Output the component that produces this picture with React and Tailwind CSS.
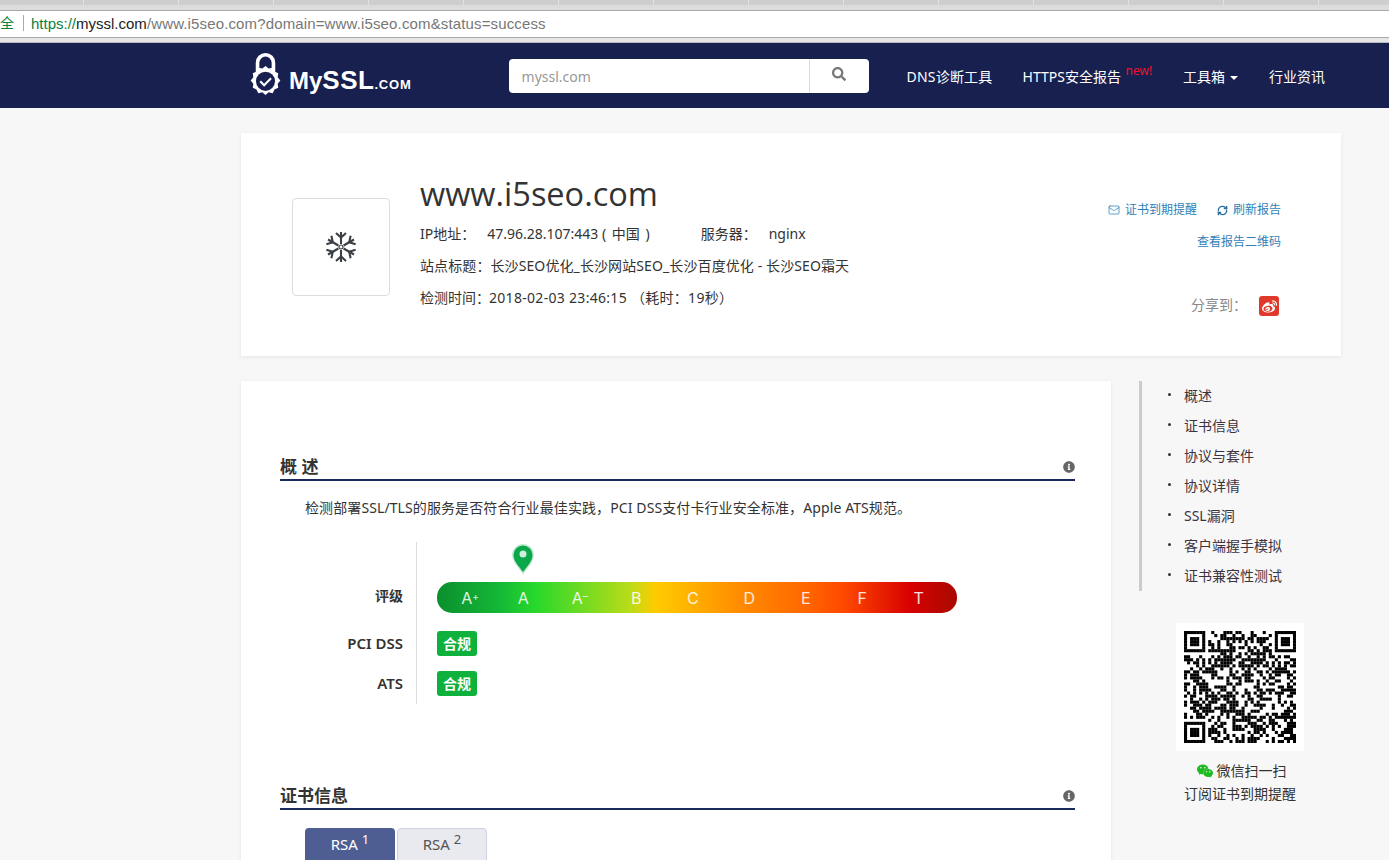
import React from "react";
import { Mail, RefreshCw } from "lucide-react";
import { FaSearch, FaInfoCircle } from "react-icons/fa";
import { SiSinaweibo, SiWechat } from "react-icons/si";

const font = "font-['Noto_Sans','Noto_Sans_CJK_SC',sans-serif]";
const sideLinks = ["概述", "证书信息", "协议与套件", "协议详情", "SSL漏洞", "客户端握手模拟", "证书兼容性测试"];

// fake qr, only has to look right
const qrCells = () => {
  const size = 37;
  const cells = [];
  let seed = 1337;
  const rand = () => {
    seed = (seed * 16807) % 2147483647;
    return seed / 2147483647;
  };
  const finder = (x, y) => {
    const dx = x < 7 ? x : x >= size - 7 ? x - (size - 7) : -1;
    const dy = y < 7 ? y : y >= size - 7 ? y - (size - 7) : -1;
    if (dx < 0 || dy < 0 || (x >= size - 7 && y >= size - 7)) return null;
    const ring = dx === 0 || dx === 6 || dy === 0 || dy === 6;
    const core = dx >= 2 && dx <= 4 && dy >= 2 && dy <= 4;
    return ring || core;
  };
  for (let y = 0; y < size; y++) {
    for (let x = 0; x < size; x++) {
      const f = finder(x, y);
      const nearFinder = (x < 8 && y < 8) || (x >= size - 8 && y < 8) || (x < 8 && y >= size - 8);
      const on = f === null ? !nearFinder && rand() > 0.47 : f;
      if (on) cells.push(<rect key={x + "-" + y} x={x} y={y} width="1.02" height="1.02" />);
    }
  }
  return cells;
};

const Logo = () => (
  <div className="flex items-center">
    <svg width="35" height="47" viewBox="0 0 33 44" className="mr-[6px] -ml-[2px]">
      <path d="M9 19V10a7.500 7.500 0 0 1 15 0v9" fill="none" stroke="#fff" strokeWidth="3.400" />
      <path
        d="M16.500 13l3 2.500 3.800-.8 1.700 3.500 3.500 1.700-.5 3.800 2.500 3-2.500 3 .5 3.800-3.500 1.700-1.700 3.500-3.800-.8-3 2.500-3-2.500-3.800.8-1.700-3.500-3.500-1.700.5-3.800-2.500-3 2.500-3-.5-3.800 3.500-1.700 1.700-3.500 3.800.8z"
        fill="#fff"
      />
      <circle cx="16.500" cy="27.500" r="9" fill="#182050" />
      <path d="M11.500 27.500l3.700 3.700 6.500-6.500" fill="none" stroke="#fff" strokeWidth="2" />
    </svg>
    <span className="text-[24px] font-semibold text-white leading-none font-['Liberation_Sans',sans-serif] mt-[9px]">
      My<span className="font-bold text-[26px] tracking-[0.5px]">SSL</span>
      <span className="font-bold text-[13px] tracking-[0.8px]">.COM</span>
    </span>
  </div>
);

const SnowIcon = () => (
  <svg width="34" height="34" viewBox="-17 -17 34 34" fill="none" stroke="#3b3f46" strokeWidth="2.100">
    {[0, 60, 120, 180, 240, 300].map((a) => (
      <g key={a} transform={`rotate(${a})`}>
        <path d="M0 -3V-15" />
        <path d="M-5 -14L0 -9.500L5 -14" />
      </g>
    ))}
    <circle cx="0" cy="0" r="2" strokeWidth="1.200" />
  </svg>
);

const SectionTitle = ({ title }) => (
  <div className="flex items-center justify-between border-b-2 border-[#1b2a5c] h-[29px] ml-[39px] mr-[36px] pt-[2px]">
    <h3 className="text-[17px] font-bold text-[#333] leading-none">{title}</h3>
    <FaInfoCircle size={12} color="#666" />
  </div>
);

const Badge = () => (
  <span className="flex items-center justify-center w-[40px] h-[25px] rounded-[3px] bg-[#0db13b] text-white text-[14px] font-bold">
    合规
  </span>
);

const Grade = ({ children, w = "w-[56.500px]" }) => (
  <span className={`${w} text-center leading-none`}>{children}</span>
);

export default function App() {
  return (
    <div className={`${font} h-[860px] w-[1389px] overflow-hidden bg-[#f7f7f7] text-[#333] text-[14px]`}>
      {/* browser bar */}
      <div className="h-[10px] bg-[#cecece] border-b-[5px] border-[#dcdcdc] flex overflow-hidden">
        {Array.from({ length: 15 }, (_, i) => (
          <span key={i} className={`${i === 0 ? "w-[84px]" : "w-[95px]"} shrink-0 h-[5px] border-r border-[#e2e2e2]`}></span>
        ))}
      </div>
      <div className="h-[28px] bg-white border-y border-[#a9a9a9] flex items-center pb-[2px] text-[15px] leading-none font-['Liberation_Sans','Noto_Sans_CJK_SC',sans-serif]">
        <span className="text-[#0b8043] text-[14px]">全</span>
        <span className="w-px h-[16px] bg-[#aaa] ml-[9px] mr-[7px]"></span>
        <span className="text-[#0b8043]">https://</span>
        <span className="text-[#222]">myssl.com</span>
        <span className="text-[#777] tracking-[0.14px]">/www.i5seo.com?domain=www.i5seo.com&amp;status=success</span>
      </div>
      <div className="h-[5px] bg-[#e6e6e6] border-b border-[#bbb]"></div>

      {/* nav */}
      <div className="h-[65px] bg-[#182050] flex items-center pl-[250px]">
        <Logo />
        <div className="ml-[97px] flex h-[34px] w-[360px] rounded-[4px] bg-white">
          <div className="flex-1 pl-[13px] pt-px flex items-center text-[14px] text-[#999]">myssl.com</div>
          <div className="w-[60px] border-l border-[#ddd] flex items-center justify-center pb-[3px]">
            <FaSearch size={14} color="#777" />
          </div>
        </div>
        <nav className="ml-[38px] flex items-center text-white text-[14px] leading-none mt-[2px]">
          <a className="tracking-[0.2px]">DNS诊断工具</a>
          <a className="ml-[30px] relative">
            HTTPS安全报告
            <span className="absolute left-[103px] -top-[5px] text-[12px] text-[#f0102a] whitespace-nowrap">new!</span>
          </a>
          <a className="ml-[62px] flex items-center">
            工具箱
            <span className="ml-[5px] mt-[2px] border-x-[4px] border-x-transparent border-t-[4px] border-t-white"></span>
          </a>
          <a className="ml-[31px]">行业资讯</a>
        </nav>
      </div>

      <div className="ml-[241px] w-[1100px]">
        {/* report head */}
        <div className="mt-[25px] h-[223px] bg-white shadow-[0_1px_4px_rgba(0,0,0,0.08)] flex pl-[51px] pr-[60px]">
          <div className="mt-[65px] w-[98px] h-[98px] border border-[#ddd] rounded-[4px] flex items-center justify-center">
            <SnowIcon />
          </div>
          <div className="ml-[30px] flex-1">
            <h1 className="mt-[39px] text-[32.500px] leading-[44px] text-[#333] font-['Open_Sans',sans-serif]">www.i5seo.com</h1>
            <div className="mt-[9px] leading-[18px] flex whitespace-pre">
              <span>IP地址：</span>
              <span className="ml-[12px]">47.96.28.107:443 ( <span className="mx-[2px]">中国</span> )</span>
              <span className="ml-[51px]">服务器：</span>
              <span className="ml-[12px]">nginx</span>
            </div>
            <div className="mt-[14px] leading-[18px] tracking-[0.1px]">站点标题：长沙SEO优化_长沙网站SEO_长沙百度优化 - 长沙SEO霜天</div>
            <div className="mt-[14px] leading-[18px] whitespace-pre">
              检测时间：<span className="-ml-[1px] tracking-[0.3px]">2018-02-03 23:46:15 （耗时：19秒）</span>
            </div>
          </div>
          <div className="flex flex-col items-end text-[12px] text-[#2f7fb8]">
            <div className="mt-[69px] flex items-center leading-[16px]">
              <Mail size={12} strokeWidth={1.500} className="mr-[5px]" />
              证书到期提醒
              <RefreshCw size={11} strokeWidth={3} className="ml-[20px] mr-[5px] text-[#2a6f9e]" />
              刷新报告
            </div>
            <div className="mt-[16px] leading-[16px]">查看报告二维码</div>
            <div className="mt-[46px] flex items-center text-[14px] text-[#888]">
              <span className="-mt-[3px]">分享到：</span>
              <span className="ml-[12px] mr-[2px] w-[20px] h-[20px] rounded-[3px] bg-[#e0392c] flex items-center justify-center">
                <SiSinaweibo size={15} color="#fff" />
              </span>
            </div>
          </div>
        </div>

        <div className="mt-[25px] flex items-start">
          {/* main card */}
          <div className="w-[870px] h-[500px] bg-white shadow-[0_1px_4px_rgba(0,0,0,0.08)] pt-[71px]">
            <SectionTitle title="概 述" />
            <p className="mt-[17px] ml-[64px] leading-[20px] tracking-[0.1px]">
              检测部署SSL/TLS的服务是否符合行业最佳实践，PCI DSS支付卡行业安全标准，Apple ATS规范。
            </p>
            <div className="mt-[24px] ml-[39px] w-[720px] flex h-[162px]">
              <div className="w-[137px] border-r border-[#ddd] flex flex-col items-end pr-[13px] text-[14px] font-semibold">
                <div className="mt-[44px] leading-[20px]">评级</div>
                <div className="mt-[27px] leading-[20px] text-[15px]">PCI DSS</div>
                <div className="mt-[20px] leading-[20px] text-[15px]">ATS</div>
              </div>
              <div className="relative pl-[20px] pt-[40px]">
                <svg width="28" height="36" viewBox="0 0 28 36" className="absolute left-[92px] top-0">
                  <path d="M14 30C9 23 4.500 19 4.500 13a9.500 9.500 0 0 1 19 0c0 6-4.500 10-9.500 17z" fill="#0aa84a" stroke="#0aa84a" strokeOpacity="0.25" strokeWidth="3" />
                  <circle cx="14" cy="12" r="3.500" fill="#cfeedd" />
                </svg>
                <div className="w-[520px] h-[31px] rounded-[15px] pl-[8px] flex items-center text-[16px] text-white/85 font-['Inter',sans-serif] bg-[linear-gradient(90deg,#0b8f2e_0%,#14b836_12%,#28d92c_19%,#b8dc18_37%,#ffcc00_42%,#ff8c00_58%,#ff6a00_70%,#ff4a00_78%,#d80000_91%,#a80a00_100%)]">
                  <Grade w="w-[50px]">A<sup className="text-[10px] -top-[4px] relative">+</sup></Grade>
                  <Grade>A</Grade>
                  <Grade>A<sup className="text-[10px] -top-[4px] relative">–</sup></Grade>
                  <Grade>B</Grade>
                  <Grade>C</Grade>
                  <Grade>D</Grade>
                  <Grade>E</Grade>
                  <Grade>F</Grade>
                  <Grade>T</Grade>
                </div>
                <div className="mt-[18px]"><Badge /></div>
                <div className="mt-[15px]"><Badge /></div>
              </div>
            </div>
            <div className="mt-[77px]">
              <SectionTitle title="证书信息" />
            </div>
            <div className="mt-[18px] ml-[64px] flex gap-[2px] text-[15px]">
              <div className="w-[90px] h-[40px] rounded-t-[4px] bg-[#4e5d92] text-white pt-[5px] text-center">
                RSA <sup className="text-[13px]">1</sup>
              </div>
              <div className="w-[90px] h-[40px] rounded-t-[4px] bg-[#e9eaf0] border border-[#cfd2e2] text-[#555] pt-[4px] text-center">
                RSA <sup className="text-[13px]">2</sup>
              </div>
            </div>
          </div>

          {/* sidebar */}
          <div className="ml-[28px] w-[202px]">
            <ul className="border-l-[3px] border-[#ccc] h-[210px] pl-[26px] text-[#3d3340]">
              {sideLinks.map((l) => (
                <li key={l} className="h-[30px] flex items-center pb-[2px]">
                  <span className="w-[3px] h-[3px] rounded-full bg-[#333] mr-[13px] -mt-px"></span>
                  {l}
                </li>
              ))}
            </ul>
            <div className="mt-[32px] ml-[37px] w-[128px] h-[128px] bg-white pt-[8px] pl-[8px]">
              <svg viewBox="0 0 37 37" width="112" height="112" fill="#000">
                {qrCells()}
              </svg>
            </div>
            <div className="ml-[37px] w-[128px] mt-[8px] text-center leading-[23px]">
              <div className="flex items-center justify-center pl-[3px]">
                <SiWechat size={16} color="#1fb922" className="mr-[4px]" />
                微信扫一扫
              </div>
              <div className="whitespace-nowrap">订阅证书到期提醒</div>
            </div>
          </div>
        </div>
      </div>
    </div>
  );
}
